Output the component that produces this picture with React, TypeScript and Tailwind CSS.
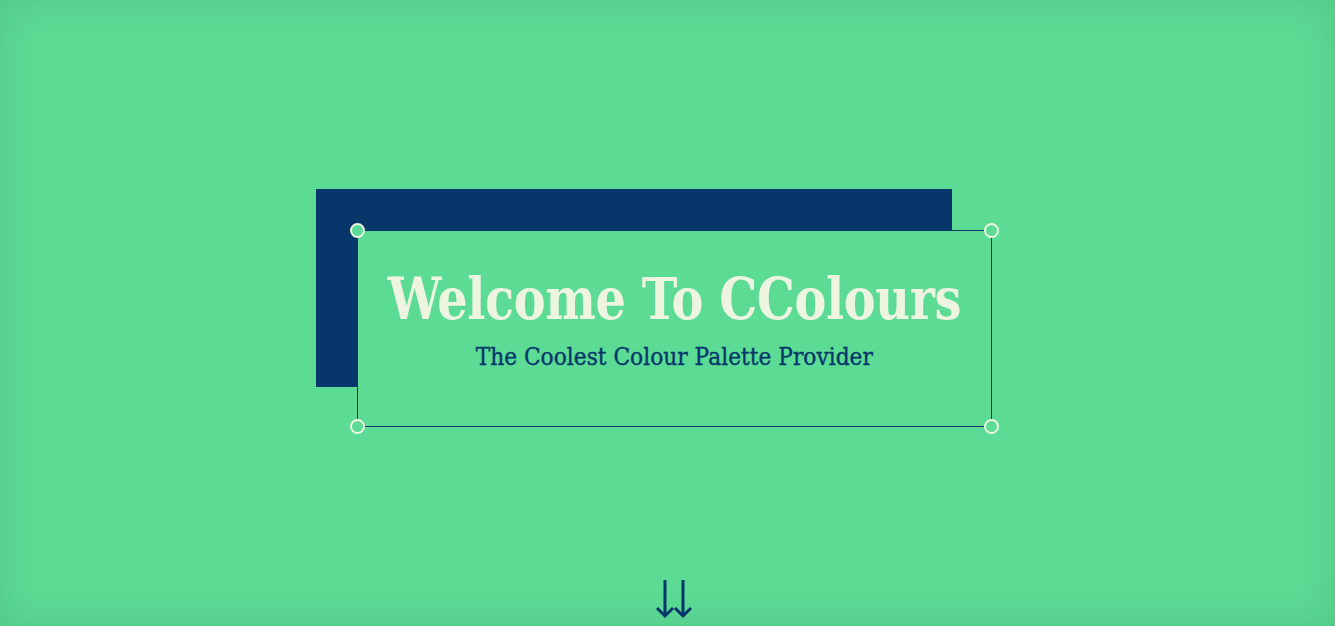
import React from "react";

const Dot = ({ cls }: { cls: string }) => (
  <span
    className={`absolute w-[15px] h-[15px] rounded-full border-2 border-[#edf5e1] bg-[#5cdb95] ${cls}`}
  />
);

export default function App() {
  return (
    <div className="w-full h-[626px] overflow-hidden bg-[#5cdb95] shadow-[inset_0_0_40px_rgba(0,0,0,0.10)] flex flex-col" style={{ fontFamily: '"DejaVu Serif", serif' }}>
      <div className="relative ml-[316px] mt-[189px] w-[676px] pt-[41px] pl-[41px]">
        <div className="absolute left-0 top-0 w-[636px] h-[198px] bg-[#07376a]" />
        <div className="relative w-[635px] h-[197px] border border-[#07376a] bg-[#5cdb95] flex flex-col items-center pt-[34px]">
          <h1 className="text-[#edf5e1] font-bold text-[58px] leading-[68px] tracking-[-0.5px] whitespace-nowrap scale-x-[0.825]">Welcome To CColours</h1>
          <p className="text-[#07376a] text-[25px] leading-[32px] mt-[8px] whitespace-nowrap scale-x-[0.87] [-webkit-text-stroke:0.4px_#07376a]">The Coolest Colour Palette Provider</p>
          <Dot cls="-left-[8px] -top-[8px]" />
          <Dot cls="-right-[8px] -top-[8px]" />
          <Dot cls="-left-[8px] -bottom-[8px]" />
          <Dot cls="-right-[8px] -bottom-[8px]" />
        </div>
      </div>
      <div className="flex justify-center mt-[152px] ml-[13px]">
        <svg width="40" height="40" viewBox="0 0 40 40" fill="none" stroke="#07376a" strokeWidth="3" strokeLinecap="butt">
          <path d="M11 1 V37 M3 29 L11 37 L19 29" />
          <path d="M29 1 V37 M21 29 L29 37 L37 29" />
        </svg>
      </div>
    </div>
  );
}
